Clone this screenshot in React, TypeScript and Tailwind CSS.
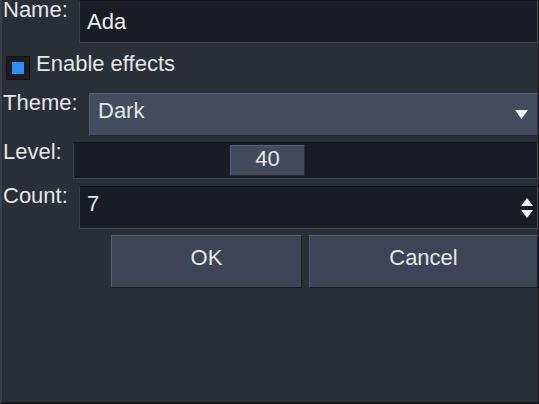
import React, { useState } from 'react';

const font = { fontFamily: '"Liberation Sans", Arial, sans-serif' };

const Label: React.FC<{ text: string; width: string }> = ({ text, width }) => (
  <div className={`${width} shrink-0 pl-[1px] text-[22px] leading-[20px] text-[#e4e6ea]`}>{text}</div>
);

const App: React.FC = () => {
  const [name, setName] = useState('Ada');
  const [enabled, setEnabled] = useState(true);
  const [count, setCount] = useState(7);

  return (
    <div
      style={font}
      className="w-[539px] h-[404px] overflow-hidden bg-[#2a2e37] border-l-2 border-l-[#3a3f4a] border-r border-r-[#16181c] border-b-2 border-b-[#15171b] text-[#e4e6ea]"
    >
      {/* Name */}
      <div className="flex">
        <Label text="Name:" width="w-[77px]" />
        <div className="flex-1 h-[43px] bg-[#1b1d24] border border-t-[#111317] border-l-[#3a3e48] border-b-[#454a57] border-r-[#4a4f5c] pl-[7px] pt-[8px]">
          <input
            value={name}
            onChange={e => setName(e.target.value)}
            className="w-full bg-transparent outline-none text-[22px] leading-[20px] text-[#eceef2]"
          />
        </div>
      </div>

      {/* Checkbox */}
      <div className="flex items-start mt-[11px] pl-[4px] cursor-pointer" onClick={() => setEnabled(!enabled)}>
        <div className="mt-[2px] w-[24px] h-[24px] bg-[#1a1c22] border border-[#121418] flex items-center justify-center">
          {enabled && <div className="w-[12px] h-[12px] bg-[#2f8ef6]" />}
        </div>
        <span className="ml-[6px] text-[22px] leading-[20px]">Enable effects</span>
      </div>

      {/* Theme */}
      <div className="flex mt-[13px]">
        <Label text="Theme:" width="w-[87px]" />
        <div className="flex-1 h-[43px] flex items-start justify-between bg-[#444b5c] border border-t-[#5d6476] border-l-[#4f5668] border-b-[#23262e] border-r-[#2c3038] pl-[8px] pt-[7px] pr-[9px]">
          <span className="text-[22px] leading-[20px]">Dark</span>
          <svg width="13" height="9" viewBox="0 0 13 9" className="mt-[9px]">
            <path d="M0 0 H13 L6.5 9 Z" fill="#f2f3f5" />
          </svg>
        </div>
      </div>

      {/* Level */}
      <div className="flex mt-[6px]">
        <Label text="Level:" width="w-[71px]" />
        <div className="flex-1 h-[37px] bg-[#1b1d24] border border-t-[#111317] border-l-[#3a3e48] border-b-[#454a57] border-r-[#4a4f5c] pl-[156px] pt-[2px]">
          <div className="w-[75px] h-[31px] bg-[#434a5b] border border-t-[#5a6173] border-l-[#555c6e] border-b-[#252830] border-r-[#2a2e36] flex justify-center pt-[3px]">
            <span className="text-[22px] leading-[20px]">40</span>
          </div>
        </div>
      </div>

      {/* Count */}
      <div className="flex mt-[7px]">
        <Label text="Count:" width="w-[77px]" />
        <div className="flex-1 h-[43px] flex items-start justify-between bg-[#1b1d24] border border-t-[#111317] border-l-[#3a3e48] border-b-[#454a57] border-r-[#4a4f5c] pl-[7px] pt-[7px] pr-[4px]">
          <span className="text-[22px] leading-[20px]">{count}</span>
          <div className="flex flex-col gap-[4px] mt-[4px]">
            <svg width="12" height="8" viewBox="0 0 12 8" onClick={() => setCount(count + 1)}>
              <path d="M6 0 L12 8 H0 Z" fill="#f2f3f5" />
            </svg>
            <svg width="12" height="8" viewBox="0 0 12 8" onClick={() => setCount(count - 1)}>
              <path d="M0 0 H12 L6 8 Z" fill="#f2f3f5" />
            </svg>
          </div>
        </div>
      </div>

      {/* Buttons */}
      <div className="flex mt-[6px] ml-[109px] gap-[7px]">
        <button className="w-[191px] h-[53px] bg-[#3e4455] border border-t-[#5b6273] border-l-[#555c6d] border-b-[#1b1d23] border-r-[#1e2027] text-[22px] leading-[20px] text-[#e4e6ea] flex justify-center items-start pt-[12px]">
          OK
        </button>
        <button className="flex-1 h-[53px] bg-[#3e4455] border border-t-[#5b6273] border-l-[#555c6d] border-b-[#1b1d23] border-r-[#1e2027] text-[22px] leading-[20px] text-[#e4e6ea] flex justify-center items-start pt-[12px]">
          Cancel
        </button>
      </div>
    </div>
  );
};

export default App;
